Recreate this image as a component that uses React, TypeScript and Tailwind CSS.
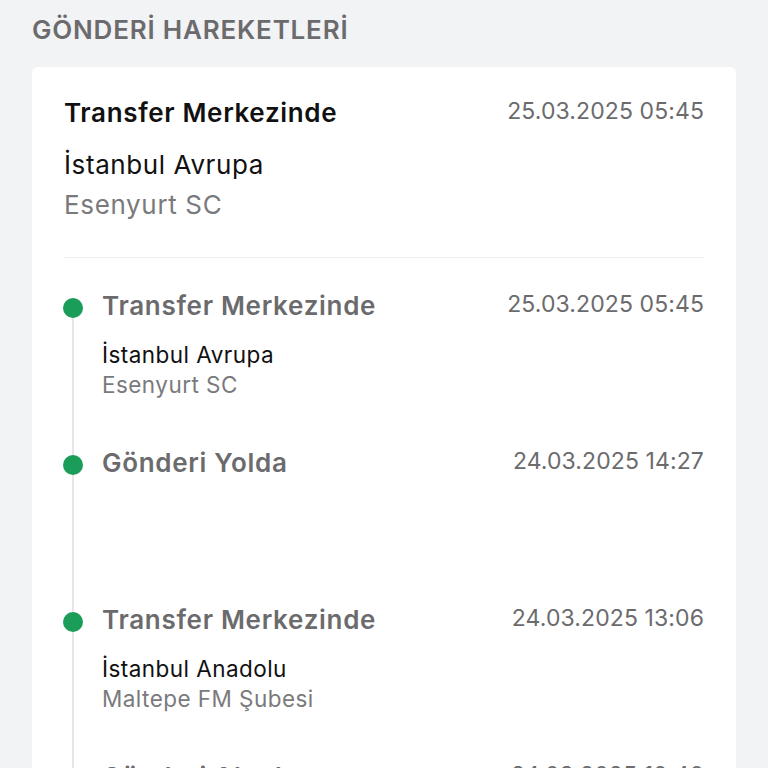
import React from 'react';

interface Movement {
  title: string;
  date: string;
  city?: string;
  branch?: string;
}

const movements: Movement[] = [
  { title: 'Transfer Merkezinde', date: '25.03.2025 05:45', city: 'İstanbul Avrupa', branch: 'Esenyurt SC' },
  { title: 'Gönderi Yolda', date: '24.03.2025 14:27' },
  { title: 'Transfer Merkezinde', date: '24.03.2025 13:06', city: 'İstanbul Anadolu', branch: 'Maltepe FM Şubesi' },
  { title: 'Gönderi Alındı', date: '24.03.2025 10:40', city: 'İstanbul Anadolu', branch: 'Kadıköy Şubesi' },
];

const TimelineItem: React.FC<{ item: Movement; first: boolean }> = ({ item, first }) => (
  <div className="flex min-h-[157px]">
    <div className="flex w-5 shrink-0 flex-col items-center ml-[-1px]">
      <div className={`h-2 w-[2px] ${first ? 'bg-transparent' : 'bg-[#e6e6e8]'}`} />
      <div className="h-5 w-5 rounded-full bg-[#199d59]" />
      <div className="w-[2px] flex-1 bg-[#e6e6e8]" />
    </div>
    <div className="ml-[19px] flex-1 pb-[46px]">
      <div className="flex items-start justify-between">
        <span className="text-[26px] font-semibold leading-8 tracking-[0.7px] text-[#6b6b6e]">{item.title}</span>
        <span className="text-[23px] leading-7 tracking-[0.1px] text-[#6b6b6e]">{item.date}</span>
      </div>
      {item.city && (
        <div className="mt-[19px] text-[22.5px] leading-7 tracking-[0.45px] text-[#111]">{item.city}</div>
      )}
      {item.branch && (
        <div className="mt-[2px] text-[22.5px] leading-7 tracking-[0.45px] text-[#7a7a7d]">{item.branch}</div>
      )}
    </div>
  </div>
);

const App: React.FC = () => {
  const latest = movements[0];

  return (
    <div className="h-[768px] overflow-hidden bg-[#f2f3f5] px-8 pt-[14px] font-['Inter',sans-serif]">
      <h2 className="text-[26px] font-semibold leading-8 tracking-[0.8px] text-[#6b6b6e]">GÖNDERİ HAREKETLERİ</h2>

      <div className="mt-[21px] rounded-md bg-white px-8 pt-[30px]">
        <div className="flex items-start justify-between">
          <span className="text-[26px] font-semibold leading-8 tracking-[0.65px] text-[#111]">{latest.title}</span>
          <span className="text-[23px] leading-7 tracking-[0.1px] text-[#6b6b6e]">{latest.date}</span>
        </div>
        <div className="mt-5 text-[26px] leading-8 tracking-[0.6px] text-[#111]">{latest.city}</div>
        <div className="mt-2 text-[26px] leading-8 tracking-[0.65px] text-[#7a7a7d]">{latest.branch}</div>

        <div className="mt-9 h-px bg-[#f0f0f2]" />

        <div className="pt-8">
          {movements.map((m, i) => (
            <TimelineItem key={i} item={m} first={i === 0} />
          ))}
        </div>
      </div>
    </div>
  );
};

export default App;
